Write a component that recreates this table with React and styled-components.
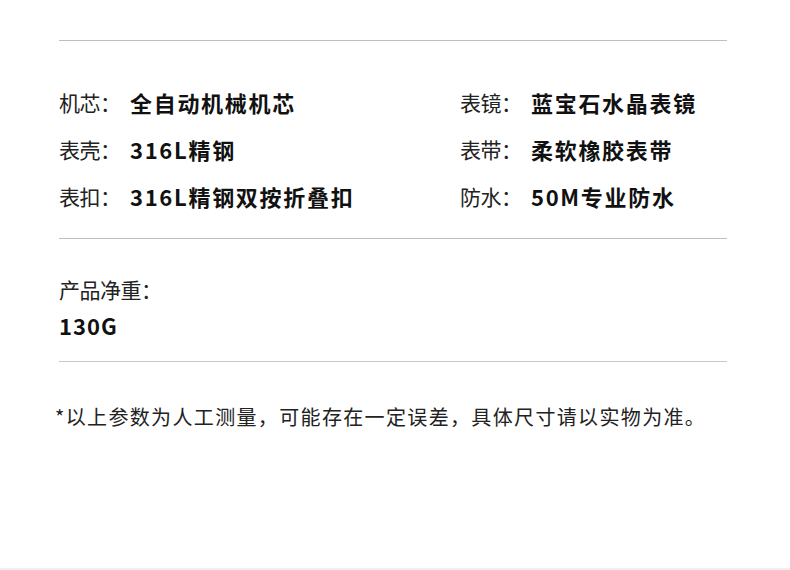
import React from "react";
import styled, { createGlobalStyle } from "styled-components";

const Global = createGlobalStyle`
  html, body { margin: 0; padding: 0; background: #ffffff; }
  body {
    font-family: "Noto Sans CJK SC", "Noto Sans", sans-serif;
    color: #1e1e1e;
  }
`;

const Page = styled.div`
  height: 570px;
  box-sizing: border-box;
  border-bottom: 2px solid #efefef;
  padding-top: 40px;
`;

const Content = styled.div`
  margin-left: 59px;
  width: 668px;
`;

const Section = styled.section`
  border-top: 1px solid ${(p) => p.$line || "#bfbfbf"};
  padding: ${(p) => p.$pad};
`;

const SpecGrid = styled.div`
  display: grid;
  grid-template-columns: 401px 1fr;
`;

const SpecItem = styled.div`
  display: flex;
  align-items: center;
  height: 47px;
  white-space: nowrap;
`;

const Label = styled.span`
  font-size: 21px;
  font-weight: 400;
  letter-spacing: -0.5px;
  color: #222;
  width: 71px;
  flex: none;
`;

const Value = styled.span`
  font-size: 22px;
  font-weight: 700;
  letter-spacing: 1.7px;
  color: #111;
`;

const Line = styled.div`
  font-size: ${(p) => (p.$bold ? "22px" : "21px")};
  line-height: 36px;
  font-weight: ${(p) => (p.$bold ? 700 : 400)};
  letter-spacing: ${(p) => (p.$bold ? "1px" : "-0.5px")};
  color: ${(p) => (p.$bold ? "#111" : "#222")};
`;

const Note = styled.p`
  margin: 40px 0 0 -4px;
  font-size: 20px;
  line-height: 30px;
  letter-spacing: 1.35px;
  color: #222;
  white-space: nowrap;
`;

const specs = [
  ["机芯：", "全自动机械机芯"],
  ["表镜：", "蓝宝石水晶表镜"],
  ["表壳：", "316L精钢"],
  ["表带：", "柔软橡胶表带"],
  ["表扣：", "316L精钢双按折叠扣"],
  ["防水：", "50M专业防水"],
];

export default function App() {
  return (
    <Page>
      <Global />
      <Content>
        <Section $pad="37px 0 19px">
          <SpecGrid>
            {specs.map(([l, v]) => (
              <SpecItem key={l}>
                <Label>{l}</Label>
                <Value>{v}</Value>
              </SpecItem>
            ))}
          </SpecGrid>
        </Section>
        <Section $pad="32px 0 18px">
          <Line>产品净重：</Line>
          <Line $bold>130G</Line>
        </Section>
        <Section $line="#c9c9c9" $pad="0">
          <Note>*以上参数为人工测量，可能存在一定误差，具体尺寸请以实物为准。</Note>
        </Section>
      </Content>
    </Page>
  );
}
